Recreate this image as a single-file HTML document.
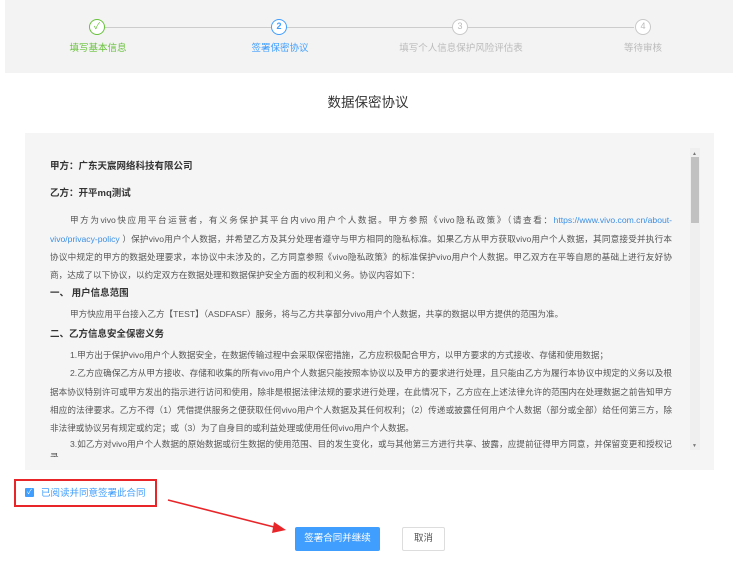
<!DOCTYPE html>
<html><head><meta charset="utf-8"><style>
*{margin:0;padding:0;box-sizing:border-box}
body{width:736px;height:570px;background:#fff;font-family:"Liberation Sans","Noto Sans CJK SC",sans-serif;position:relative;overflow:hidden;color:#333}
.top{position:absolute;left:5px;top:0;width:728px;height:73px;background:#f3f3f3}
.line{position:absolute;top:27px;height:1px;background:#ccc}
.c{position:absolute;top:19px;width:16px;height:16px;border-radius:50%;border:1.5px solid #c8c8c8;background:#fff;font-size:9px;color:#bbb;text-align:center;line-height:13px}
.lbl{position:absolute;top:40px;font-size:9.5px;color:#bbb;transform:translateX(-50%);white-space:nowrap}
.title{position:absolute;top:91px;left:0;width:736px;text-align:center;font-size:13.5px;color:#333}
.box{position:absolute;left:25px;top:133px;width:689px;height:337px;background:#f5f5f5}
.clip{position:absolute;left:25px;top:12px;width:640px;height:312px;overflow:hidden}
.l{position:absolute;left:0;width:622px;font-size:8.6px;color:#555;white-space:nowrap;text-align:justify;text-align-last:justify;line-height:12px}
.n{text-align-last:left}
.b{font-weight:bold;color:#333;font-size:9.5px}
a{color:#3a8ee6;text-decoration:none}
.sb{position:absolute;left:665px;top:15px;width:10px;height:302px;background:#efefef}
.th{position:absolute;left:666px;top:24px;width:8px;height:66px;background:#c1c1c1}
</style></head><body>
<div class="top">
<div class="line" style="left:100px;width:166px"></div>
<div class="line" style="left:282px;width:166px"></div>
<div class="line" style="left:463px;width:166px"></div>
<div class="c" style="left:84px;border-color:#67c23a;color:#67c23a">✓</div>
<div class="c" style="left:266px;border-color:#409eff;color:#409eff;font-weight:bold">2</div>
<div class="c" style="left:447px">3</div>
<div class="c" style="left:630px">4</div>
<div class="lbl" style="left:93px;color:#67c23a">填写基本信息</div>
<div class="lbl" style="left:275px;color:#409eff">签署保密协议</div>
<div class="lbl" style="left:456px">填写个人信息保护风险评估表</div>
<div class="lbl" style="left:638px">等待审核</div>
</div>
<div class="title">数据保密协议</div>
<div class="box">
<div class="clip">
<div class="l n b" style="top:16px">甲方：广东天宸网络科技有限公司</div>
<div class="l n b" style="top:43px">乙方：开平mq测试</div>
<div class="l" style="top:69px;left:20px;width:602px">甲方为vivo快应用平台运营者，有义务保护其平台内vivo用户个人数据。甲方参照《vivo隐私政策》（请查看：<a>https://www.vivo.com.cn/about-</a></div>
<div class="l" style="top:88px"><a>vivo/privacy-policy</a> ）保护vivo用户个人数据，并希望乙方及其分处理者遵守与甲方相同的隐私标准。如果乙方从甲方获取vivo用户个人数据，其同意接受并执行本</div>
<div class="l" style="top:106px">协议中规定的甲方的数据处理要求，本协议中未涉及的，乙方同意参照《vivo隐私政策》的标准保护vivo用户个人数据。甲乙双方在平等自愿的基础上进行友好协</div>
<div class="l n" style="top:124px">商，达成了以下协议，以约定双方在数据处理和数据保护安全方面的权利和义务。协议内容如下：</div>
<div class="l n b" style="top:143px">一、 用户信息范围</div>
<div class="l n" style="top:163px;left:20px">甲方快应用平台接入乙方【TEST】（ASDFASF）服务，将与乙方共享部分vivo用户个人数据，共享的数据以甲方提供的范围为准。</div>
<div class="l n b" style="top:184px">二、乙方信息安全保密义务</div>
<div class="l n" style="top:204px;left:20px">1.甲方出于保护vivo用户个人数据安全，在数据传输过程中会采取保密措施，乙方应积极配合甲方，以甲方要求的方式接收、存储和使用数据；</div>
<div class="l" style="top:222px;left:20px;width:602px">2.乙方应确保乙方从甲方接收、存储和收集的所有vivo用户个人数据只能按照本协议以及甲方的要求进行处理，且只能由乙方为履行本协议中规定的义务以及根</div>
<div class="l" style="top:241px">据本协议特别许可或甲方发出的指示进行访问和使用，除非是根据法律法规的要求进行处理，在此情况下，乙方应在上述法律允许的范围内在处理数据之前告知甲方</div>
<div class="l" style="top:259px">相应的法律要求。乙方不得（1）凭借提供服务之便获取任何vivo用户个人数据及其任何权利；（2）传递或披露任何用户个人数据（部分或全部）给任何第三方，除</div>
<div class="l n" style="top:277px">非法律或协议另有规定或约定；或（3）为了自身目的或利益处理或使用任何vivo用户个人数据。</div>
<div class="l" style="top:293px;left:20px;width:602px">3.如乙方对vivo用户个人数据的原始数据或衍生数据的使用范围、目的发生变化，或与其他第三方进行共享、披露，应提前征得甲方同意，并保留变更和授权记</div>
<div class="l n" style="top:306px">录</div>
</div>
<div class="sb"></div><div class="th"></div>
<div style="position:absolute;left:667px;top:18px;font-size:5px;color:#777">▲</div>
<div style="position:absolute;left:667px;top:310px;font-size:5px;color:#777">▼</div>
</div>
<div style="position:absolute;left:14px;top:479px;width:143px;height:28px;border:2px solid #e8262a"></div>
<div style="position:absolute;left:25px;top:488px;width:9px;height:9px;background:#409eff;border-radius:1px;color:#fff;font-size:7px;line-height:9px;text-align:center">✓</div>
<div style="position:absolute;left:41px;top:485px;font-size:9.5px;color:#409eff">已阅读并同意签署此合同</div>
<svg style="position:absolute;left:0;top:0" width="736" height="570"><line x1="168" y1="500" x2="278" y2="528" stroke="#e8262a" stroke-width="1.6"/><polygon points="286,530 274,522 272,533" fill="#e8262a"/></svg>
<div style="position:absolute;left:295px;top:527px;width:85px;height:24px;background:#409eff;border-radius:2px;color:#fff;font-size:9.5px;text-align:center;line-height:24px">签署合同并继续</div>
<div style="position:absolute;left:402px;top:527px;width:43px;height:24px;border:1px solid #ddd;border-radius:2px;color:#555;font-size:9.5px;text-align:center;line-height:22px">取消</div>
</body></html>
